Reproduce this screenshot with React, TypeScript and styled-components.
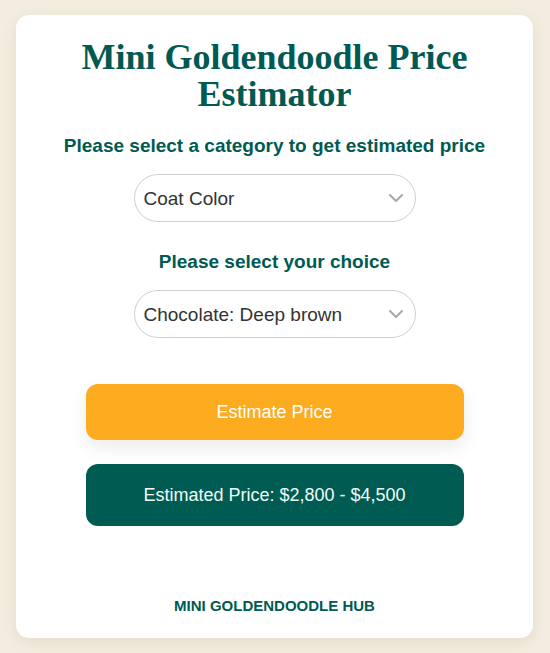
import React, { useState } from 'react'
import styled, { createGlobalStyle } from 'styled-components'

const GlobalStyle = createGlobalStyle`
  html, body {
    margin: 0;
    padding: 0;
    background: #f3ede0;
  }
  body {
    font-family: 'Liberation Sans', Arial, sans-serif;
  }
`

const Page = styled.div`
  padding: 15px 17px 16px 16px;
`

const Card = styled.div`
  background: #fff;
  border-radius: 13px;
  box-shadow: 0 4px 14px rgba(120, 100, 60, 0.12);
  padding: 24px 20px 24px;
  display: flex;
  flex-direction: column;
  align-items: center;
`

const Title = styled.h1`
  margin: 0 0 22px;
  font-family: 'Liberation Serif', 'Times New Roman', serif;
  font-weight: bold;
  font-size: 36px;
  line-height: 37px;
  color: #005a52;
  text-align: center;
  padding: 0 40px;
`

const Label = styled.div`
  font-size: 19px;
  line-height: 22px;
  font-weight: bold;
  color: #005a52;
  text-align: center;
  margin-bottom: 17px;
`

const SelectWrap = styled.div<{ $gap: number }>`
  position: relative;
  width: 282px;
  margin-bottom: ${(p) => p.$gap}px;
`

const Select = styled.select`
  appearance: none;
  width: 100%;
  height: 48px;
  border: 1px solid #cfcfcf;
  border-radius: 24px;
  background: #fff;
  padding: 0 40px 0 9px;
  font-family: 'Liberation Sans', Arial, sans-serif;
  font-size: 19px;
  color: #333;
  outline: none;
`

const Chevron = styled.svg`
  position: absolute;
  right: 12px;
  top: 17px;
  pointer-events: none;
`

const EstimateButton = styled.button`
  width: 378px;
  height: 56px;
  border: none;
  border-radius: 12px;
  background: #fdab1f;
  color: #fff;
  font-family: 'Liberation Sans', Arial, sans-serif;
  font-size: 18px;
  box-shadow: 0 8px 18px rgba(0, 0, 0, 0.08);
  margin-bottom: 24px;
  cursor: pointer;
`

const Result = styled.div`
  width: 378px;
  height: 62px;
  border-radius: 12px;
  background: #005b53;
  color: #f1fbf8;
  font-size: 18px;
  display: flex;
  align-items: center;
  justify-content: center;
  margin-bottom: 71px;
`

const Footer = styled.div`
  font-size: 15px;
  line-height: 17px;
  font-weight: bold;
  color: #005a52;
  text-align: center;
`

const Arrow = () => (
  <Chevron width="16" height="14" viewBox="0 0 16 14">
    <path d="M2 4 L8 10 L14 4" fill="none" stroke="#a8a8a8" strokeWidth="2" strokeLinecap="round" strokeLinejoin="round" />
  </Chevron>
)

export default function App() {
  const [category, setCategory] = useState('coat')
  const [choice, setChoice] = useState('chocolate')

  return (
    <Page>
      <GlobalStyle />
      <Card>
        <Title>Mini Goldendoodle Price Estimator</Title>
        <Label>Please select a category to get estimated price</Label>
        <SelectWrap $gap={29}>
          <Select value={category} onChange={(e) => setCategory(e.target.value)}>
            <option value="coat">Coat Color</option>
            <option value="size">Size</option>
            <option value="generation">Generation</option>
          </Select>
          <Arrow />
        </SelectWrap>
        <Label>Please select your choice</Label>
        <SelectWrap $gap={46}>
          <Select value={choice} onChange={(e) => setChoice(e.target.value)}>
            <option value="chocolate">Chocolate: Deep brown</option>
            <option value="cream">Cream: Light beige</option>
            <option value="red">Red: Rich auburn</option>
          </Select>
          <Arrow />
        </SelectWrap>
        <EstimateButton>Estimate Price</EstimateButton>
        <Result>Estimated Price: $2,800 - $4,500</Result>
        <Footer>MINI GOLDENDOODLE HUB</Footer>
      </Card>
    </Page>
  )
}
